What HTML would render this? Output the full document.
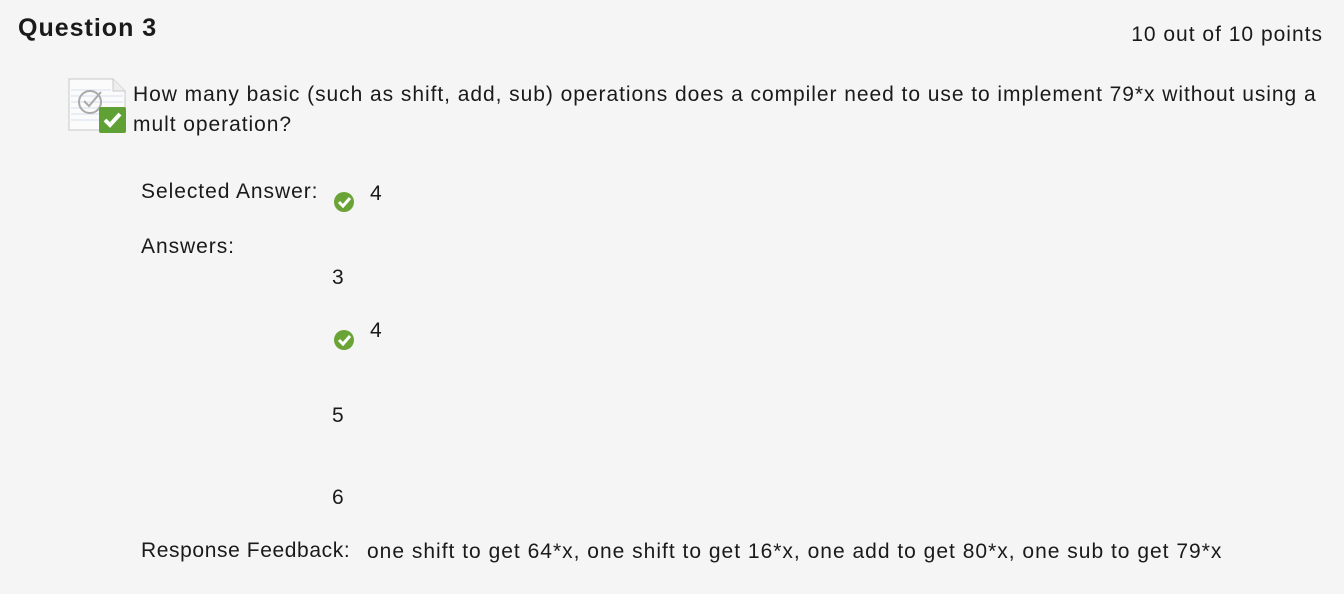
<!DOCTYPE html>
<html><head><meta charset="utf-8"><style>
body{margin:0;width:1344px;height:594px;background:#f5f5f5;font-family:"Liberation Sans",sans-serif;color:#1a1a1a;position:relative;overflow:hidden}
.t{position:absolute;white-space:nowrap;font-size:21px;line-height:1;letter-spacing:0.95px}
.chk{position:absolute;width:22px;height:22px}
</style></head><body>
<div class="t" style="left:18px;top:16px;font-size:25px;font-weight:bold;letter-spacing:1px">Question 3</div>
<div class="t" style="right:21px;top:24px;font-size:21px;letter-spacing:1px">10 out of 10 points</div>
<svg style="position:absolute;left:66px;top:76px" width="64" height="60" viewBox="0 0 64 60">
<path d="M3 3h44l12 12v39H3z" fill="#fbfbfb" stroke="#c8c8c8"/>
<path d="M47 3v12h12" fill="#eee" stroke="#c8c8c8"/>
<g stroke="#d6e2ee"><line x1="5" y1="14" x2="45" y2="14"/><line x1="5" y1="20" x2="57" y2="20"/><line x1="5" y1="26" x2="57" y2="26"/><line x1="5" y1="32" x2="57" y2="32"/><line x1="5" y1="38" x2="57" y2="38"/><line x1="5" y1="44" x2="57" y2="44"/></g>
<circle cx="24" cy="26" r="11" fill="none" stroke="#aaa" stroke-width="2"/>
<path d="M18 25l5 5 12-14" fill="none" stroke="#aaa" stroke-width="2"/>
<rect x="33" y="31" width="27" height="26" rx="2" fill="#5fa135"/>
<path d="M39 44l5 5 10-11" fill="none" stroke="#fff" stroke-width="4"/>
</svg>
<div class="t" style="left:133px;top:84px">How many basic (such as shift, add, sub) operations does a compiler need to use to implement 79*x without using a</div>
<div class="t" style="left:133px;top:114px">mult operation?</div>
<div class="t" style="left:141px;top:181px">Selected Answer:</div>
<svg class="chk" style="left:333px;top:191px" viewBox="0 0 22 22"><circle cx="11" cy="11" r="10" fill="#6aa336"/><path d="M6 11l4 4 7-8" fill="none" stroke="#fff" stroke-width="3"/></svg>
<div class="t" style="left:370px;top:183px">4</div>
<div class="t" style="left:141px;top:236px">Answers:</div>
<div class="t" style="left:332px;top:267px">3</div>
<svg class="chk" style="left:333px;top:329px" viewBox="0 0 22 22"><circle cx="11" cy="11" r="10" fill="#6aa336"/><path d="M6 11l4 4 7-8" fill="none" stroke="#fff" stroke-width="3"/></svg>
<div class="t" style="left:370px;top:320px">4</div>
<div class="t" style="left:332px;top:405px">5</div>
<div class="t" style="left:332px;top:487px">6</div>
<div class="t" style="left:141px;top:540px;letter-spacing:0.6px">Response Feedback:</div>
<div class="t" style="left:367px;top:541px;letter-spacing:1px">one shift to get 64*x, one shift to get 16*x, one add to get 80*x, one sub to get 79*x</div>
</body></html>
